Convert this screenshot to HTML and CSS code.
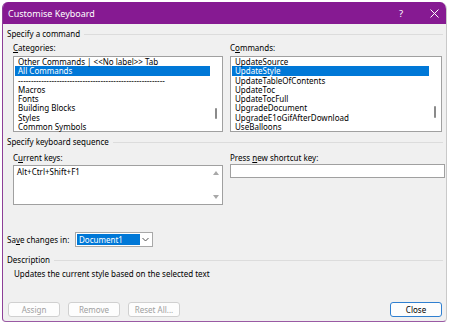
FILE: index.html
```html
<!DOCTYPE html>
<html>
<head>
<meta charset="utf-8">
<link rel="stylesheet" href="styles.css">
</head>
<body>
<div class="dialog">
  <div class="titlebar">
    <span class="title">Customise Keyboard</span>
    <span class="help">?</span>
    <span class="close">
      <svg width="9" height="9" viewBox="0 0 9 9"><path d="M0.5 0.5L8.5 8.5M8.5 0.5L0.5 8.5" stroke="#fff" stroke-width="1" fill="none"/></svg>
    </span>
  </div>
  <div class="content">
    <div class="group-head"><span>Specify a command</span><i class="rule"></i></div>
    <div class="cols lists">
      <div class="col">
        <div class="label"><u>C</u>ategories:</div>
        <div class="listbox">
          <div class="items">
            <div class="item">Other Commands | &lt;&lt;No label&gt;&gt; Tab</div>
            <div class="item sel">All Commands</div>
            <div class="item">---------------------------------------------------------</div>
            <div class="item">Macros</div>
            <div class="item">Fonts</div>
            <div class="item">Building Blocks</div>
            <div class="item">Styles</div>
            <div class="item">Common Symbols</div>
          </div>
          <div class="scroll"><i class="thumb cat-thumb"></i></div>
        </div>
      </div>
      <div class="col">
        <div class="label">C<u>o</u>mmands:</div>
        <div class="listbox">
          <div class="items">
            <div class="item">UpdateSource</div>
            <div class="item sel">UpdateStyle</div>
            <div class="item">UpdateTableOfContents</div>
            <div class="item">UpdateToc</div>
            <div class="item">UpdateTocFull</div>
            <div class="item">UpgradeDocument</div>
            <div class="item">UpgradeE1oGifAfterDownload</div>
            <div class="item">UseBalloons</div>
          </div>
          <div class="scroll"><i class="thumb cmd-thumb"></i></div>
        </div>
      </div>
    </div>
    <div class="group-head second"><span>Specify keyboard sequence</span><i class="rule"></i></div>
    <div class="cols keys">
      <div class="col">
        <div class="label">C<u>u</u>rrent keys:</div>
        <div class="keysbox">
          <div class="keyitem">Alt+Ctrl+Shift+F1</div>
          <div class="arrows"><span class="tri up"></span><span class="tri down"></span></div>
        </div>
      </div>
      <div class="col">
        <div class="label">Press <u>n</u>ew shortcut key:</div>
        <div class="input"></div>
      </div>
    </div>
    <div class="save-row">
      <span class="save-label">Sa<u>v</u>e changes in:</span>
      <div class="combo">
        <span class="combo-val">Document1</span>
        <span class="chev"><svg width="7" height="5" viewBox="0 0 7 5"><path d="M0.5 1L3.5 4L6.5 1" stroke="#555" stroke-width="1" fill="none"/></svg></span>
      </div>
    </div>
    <div class="group-head third"><span>Description</span><i class="rule"></i></div>
    <div class="desc">Updates the current style based on the selected text</div>
    <div class="buttons">
      <button class="btn" disabled>Assign</button>
      <button class="btn" disabled>Remove</button>
      <button class="btn" disabled>Reset All...</button>
      <span class="spacer"></span>
      <button class="btn primary">Close</button>
    </div>
  </div>
</div>
</body>
</html>
```

FILE: styles.css
```css
html, body {
  margin: 0;
  padding: 0;
  background: #ffffff;
}
body {
  font-family: "Noto Sans", "Open Sans", sans-serif;
  font-size: 8px;
  color: #000;
}
.dialog {
  margin: 2px 0 0 2px;
  width: 445px;
  box-sizing: border-box;
  border-left: 1px solid #8d3f98;
  border-right: 1px solid #c9c9c9;
  border-bottom: 1px solid #9a5aa4;
  border-radius: 6px 7px 4px 4px;
  overflow: hidden;
  background: #f0f0f0;
}
.titlebar {
  height: 22px;
  background: #861a92;
  color: #fff;
  display: flex;
  align-items: center;
  padding-left: 6px;
  margin-left: -1px;
}
.title {
  font-size: 9px;
  flex: 1;
}
.help {
  font-size: 9.5px;
  width: 10px;
}
.close {
  display: flex;
  margin-left: 21px;
  margin-right: 7px;
}
.content {
  padding: 4px 3px 4px 4px;
}
.group-head {
  display: flex;
  align-items: center;
  height: 12px;
  line-height: 12px;
}
.group-head .rule {
  flex: 1;
  height: 1px;
  background: #dcdcdc;
  margin-left: 4px;
}
.group-head.second { margin-top: 4px; }
.group-head.third { margin-top: 7px; }
.cols {
  display: grid;
  margin-left: 6px;
  column-gap: 7px;
}
.cols.lists { grid-template-columns: 210px 212px; }
.cols.keys { grid-template-columns: 210px 215px; margin-top: 4px; }
.lists .label { margin-top: 2px; }
.label {
  height: 12px;
  line-height: 12px;
}
.listbox {
  margin-top: 2px;
  height: 76px;
  box-sizing: border-box;
  border: 1px solid #a0a0a0;
  background: #fff;
  display: flex;
  padding: 0 0 0 1px;
}
.items {
  flex: 1;
}
.item {
  height: 9.3px;
  line-height: 9.3px;
  padding-left: 3px;
  white-space: nowrap;
}
.item.sel {
  background: #0078d7;
  color: #fff;
}
.scroll {
  width: 12px;
  display: flex;
  justify-content: center;
}
.thumb {
  width: 2px;
  background: #8a8a8a;
  border-radius: 1px;
}
.cat-thumb { margin-top: 51px; height: 11px; }
.cmd-thumb { margin-top: 49px; height: 12px; }
.keysbox {
  margin-top: 1px;
  height: 40px;
  box-sizing: border-box;
  border: 1px solid #a0a0a0;
  background: #fff;
  display: flex;
}
.keyitem {
  flex: 1;
  padding: 1px 0 0 3px;
  line-height: 10px;
}
.arrows {
  width: 12px;
  display: flex;
  flex-direction: column;
  align-items: center;
  justify-content: space-between;
  padding: 5px 0 5px 0;
}
.tri {
  width: 0;
  height: 0;
  border-left: 3px solid transparent;
  border-right: 3px solid transparent;
}
.tri.up { border-bottom: 4px solid #a8a8a8; }
.tri.down { border-top: 4px solid #a8a8a8; }
.input {
  height: 14px;
  box-sizing: border-box;
  border: 1px solid #a0a0a0;
  background: #fff;
}
.save-row {
  margin-top: 27px;
  display: flex;
  align-items: center;
  height: 15px;
}
.save-label {
  width: 68px;
}
.combo {
  width: 78px;
  height: 15px;
  box-sizing: border-box;
  border: 1px solid #a8a8a8;
  background: #fff;
  display: flex;
  padding: 1px;
}
.combo-val {
  width: 63px;
  background: #0078d7;
  color: #fff;
  line-height: 11px;
  padding-left: 2px;
  box-sizing: border-box;
}
.chev {
  flex: 1;
  display: flex;
  align-items: center;
  justify-content: center;
}
.desc {
  margin-top: 2px;
  padding-left: 7px;
  height: 12px;
  line-height: 12px;
}
.buttons {
  margin-top: 22px;
  display: flex;
  padding-left: 1px;
  gap: 8px;
}
.spacer { flex: 1; }
.btn {
  font-family: inherit;
  font-size: 8px;
  width: 52px;
  height: 15px;
  padding: 0;
  border: 1px solid #d0d0d0;
  border-radius: 3px;
  background: #fdfdfd;
  color: #000;
}
.btn:disabled { color: #a0a0a0; }
.btn.primary {
  border-color: #2f7fd0;
  margin-right: 1px;
}
```
